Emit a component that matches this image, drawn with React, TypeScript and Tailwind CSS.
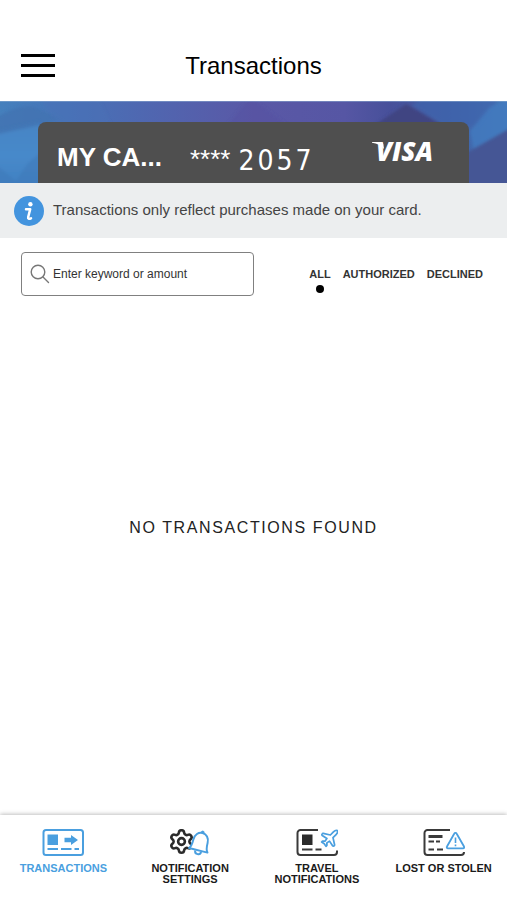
import React, { useState } from 'react';
import { Plane, Settings } from 'lucide-react';

const FILTERS = ['ALL', 'AUTHORIZED', 'DECLINED'];

const BannerArt: React.FC = () => (
  <svg className="absolute inset-0 w-full h-full" viewBox="0 0 507 82" preserveAspectRatio="none" aria-hidden="true">
    <defs>
      <linearGradient id="banner" x1="0" x2="1" y1="0" y2="0">
        <stop offset="0" stopColor="#4580bd" />
        <stop offset="0.12" stopColor="#4674b8" />
        <stop offset="0.3" stopColor="#5066b0" />
        <stop offset="0.5" stopColor="#5a58a6" />
        <stop offset="0.68" stopColor="#5656a4" />
        <stop offset="0.77" stopColor="#47509a" />
        <stop offset="0.9" stopColor="#4162a8" />
        <stop offset="1" stopColor="#4478b8" />
      </linearGradient>
      <linearGradient id="bannerSide" x1="0" x2="0" y1="0" y2="1">
        <stop offset="0" stopColor="#4684c4" />
        <stop offset="0.5" stopColor="#4789ca" />
        <stop offset="1" stopColor="#3f7fc0" />
      </linearGradient>
      <filter id="soften" x="-5%" y="-10%" width="110%" height="120%">
        <feGaussianBlur stdDeviation="1.500" />
      </filter>
    </defs>
    <rect width="507" height="82" fill="url(#banner)" />
    <g filter="url(#soften)">
      <path d="M-6 30 L40 20 L44 90 L-6 90Z" fill="url(#bannerSide)" />
      <path d="M-6 18 C8 10 20 4 34 6 L62 18 L40 24 L-6 34Z" fill="#4273b2" opacity="0.8" />
      <path d="M-6 62 L16 80 L28 62 L42 50 V90 H-6Z" fill="#3f78b8" opacity="0.5" />
      <path d="M98 -4 L112 26 H58 L40 -4Z" fill="#4a72b6" opacity="0.4" />
      <path d="M226 26 L250 -4 L290 26Z" fill="#5350a0" opacity="0.4" />
      <path d="M372 26 L406 3 L446 26Z" fill="#414582" />
      <path d="M425 -4 H500 L478 26 H446 L412 4Z" fill="#4065ac" opacity="0.7" />
      <path d="M512 -4 L490 6 L470 30 L474 50 L512 26Z" fill="#427bbf" opacity="0.8" />
      <path d="M512 26 L466 52 V90 H512Z" fill="#455795" />
    </g>
    <path d="M0 0H507" stroke="#8fb0d4" strokeWidth="1" />
  </svg>
);

const TransactionsIcon: React.FC = () => (
  <svg className="w-[42px] h-[27px]" viewBox="0 0 42 27" fill="none" stroke="#4a9fdf" strokeWidth="2" aria-hidden="true">
    <rect x="1.500" y="1" width="39.500" height="25" rx="2.500" />
    <rect x="5.500" y="5.500" width="10.500" height="10.500" fill="#4a9fdf" stroke="none" />
    <path d="M22.500 8.700h6.500V6L36 11l-7 5v-2.700h-6.500Z" fill="#4a9fdf" stroke="none" />
    <path d="M5.500 20h10.500M19 20h10.500M32.500 20h4.500" />
  </svg>
);

const NotificationIcon: React.FC = () => (
  <svg className="w-[42px] h-[27px]" viewBox="0 0 42 27" fill="none" aria-hidden="true">
    <Settings x={-1} y={-1} width={27} height={27} stroke="#2b2b2b" strokeWidth={2.3} />
    <g transform="rotate(14 31 13)">
      <path d="M28.500 22.500c0 3.800 6 3.800 6 0" stroke="#4a9fdf" strokeWidth="2" />
      <path
        d="M21.800 21.500c2-2 2.200-4.500 2.200-9.500 0-5 3.200-8.300 7.300-8.300s7.300 3.300 7.300 8.300c0 5 .2 7.500 2.200 9.500Z"
        fill="#fff"
        stroke="#4a9fdf"
        strokeWidth="2"
        strokeLinejoin="round"
      />
      <path d="M30 3.500c0-2.400 2.800-2.400 2.800 0Z" fill="#4a9fdf" stroke="#4a9fdf" strokeLinejoin="round" />
    </g>
  </svg>
);

const TravelIcon: React.FC = () => (
  <svg className="w-[42px] h-[27px]" viewBox="0 0 42 27" fill="none" stroke="#3a3a3a" strokeWidth="2" aria-hidden="true">
    <path d="M22 1H4.500a3 3 0 0 0-3 3v19a3 3 0 0 0 3 3H38a3 3 0 0 0 3-3V21.500" />
    <rect x="6" y="5.500" width="10.500" height="10.500" fill="#2b2b2b" stroke="none" />
    <path d="M6 20.500h10.500M19.500 20.500h6" />
    <Plane x={23} y={-1} width={21} height={21} stroke="#4a9fdf" strokeWidth={2} />
  </svg>
);

const LostIcon: React.FC = () => (
  <svg className="w-[42px] h-[27px]" viewBox="0 0 42 27" fill="none" stroke="#3a3a3a" strokeWidth="2" aria-hidden="true">
    <path d="M27 1H4.500a3 3 0 0 0-3 3v19a3 3 0 0 0 3 3H38a3 3 0 0 0 3-3" />
    <path d="M5.500 7.500h14" strokeWidth="3" />
    <path d="M5.500 12.500h5.500M13 12.500h4M5.500 20.500h5.500M14 20.500h6" />
    <path
      d="M31.200 4.700 24 17.500a1.200 1.200 0 0 0 1 1.900h15a1.200 1.200 0 0 0 1-1.900L33.700 4.700a1.400 1.400 0 0 0-2.500 0Z"
      stroke="#4a9fdf"
      strokeWidth="1.800"
      strokeLinejoin="round"
    />
    <path d="M32.500 8.500v5.500M32.500 15.500v1.700" stroke="#4a9fdf" strokeWidth="1.600" />
  </svg>
);

const NAV_ITEMS = [
  { lines: ['TRANSACTIONS'], icon: <TransactionsIcon />, active: true },
  { lines: ['NOTIFICATION', 'SETTINGS'], icon: <NotificationIcon />, active: false },
  { lines: ['TRAVEL', 'NOTIFICATIONS'], icon: <TravelIcon />, active: false },
  { lines: ['LOST OR STOLEN'], icon: <LostIcon />, active: false },
];

export default function App() {
  const [filter, setFilter] = useState('ALL');
  const [query, setQuery] = useState('');

  return (
    <div className="min-h-screen flex flex-col bg-white font-['Liberation_Sans',Arial,sans-serif]">
      {/* Header */}
      <header className="grid grid-cols-[1fr_auto_1fr] items-center px-[21px] pt-8 pb-0.5 h-[101px]">
        <button type="button" aria-label="Menu" className="w-[34px] flex flex-col gap-[7px]">
          <span className="h-[3px] bg-black" />
          <span className="h-[3px] bg-black" />
          <span className="h-[3px] bg-black" />
        </button>
        <h1 className="text-2xl text-black">Transactions</h1>
      </header>

      {/* Card banner */}
      <section className="relative pt-[21px] px-[38px]">
        <BannerArt />
        <div className="relative flex items-center h-[61px] pl-[19px] pr-9 rounded-t-lg bg-[#4f4f4f] text-white">
          <span className="text-[26px] font-bold pt-2.5">MY CA...</span>
          <span className="ml-7 text-[26px] pt-3.5">****</span>
          <span className="ml-2 text-[28px] tracking-[3px] pt-4 font-['DejaVu_Sans_Condensed','DejaVu_Sans',sans-serif]">
            2057
          </span>
          <span className="relative ml-auto pb-1 text-[26px] leading-none font-extrabold italic font-['Open_Sans',sans-serif]">
            <svg className="absolute -left-1 top-1 w-3 h-2" viewBox="0 0 12 8" fill="#fff" aria-hidden="true">
              <path d="M0 0h8.500c1.500 0 2.500.8 2.800 2L12 7C9.500 3.500 5 1.200 0 .7Z" />
            </svg>
            VISA
          </span>
        </div>
      </section>

      {/* Info notice */}
      <section className="flex items-center gap-[9px] h-[55px] px-3.5 bg-[#eceeef]">
        <svg className="w-[30px] h-[30px] shrink-0" viewBox="0 0 30 30" aria-hidden="true">
          <circle cx="15" cy="15" r="15" fill="#4394de" />
          <circle cx="16.400" cy="8.300" r="2.200" fill="#fff" />
          <path
            d="M12 13.300h4.200L14.200 21c-.4 1.800.6 2.200 2.800 1.300"
            fill="none"
            stroke="#fff"
            strokeWidth="2.500"
            strokeLinecap="round"
            strokeLinejoin="round"
          />
        </svg>
        <p className="text-[15px] text-[#444]">Transactions only reflect purchases made on your card.</p>
      </section>

      <main className="flex-1 flex flex-col">
        {/* Search and filters */}
        <div className="flex items-start justify-between pt-3.5 pl-[21px] pr-6">
          <label className="flex items-center gap-[3px] w-[233px] h-11 px-2 border border-[#808080] rounded">
            <svg className="w-5 h-5 shrink-0" viewBox="0 0 20 20" fill="none" stroke="#777" strokeWidth="1.400" aria-hidden="true">
              <circle cx="8" cy="8" r="6.800" />
              <path d="m13 13 5.500 5.500" strokeLinecap="round" />
            </svg>
            <input
              type="text"
              aria-label="Search transactions"
              value={query}
              onChange={(e) => setQuery(e.target.value)}
              placeholder="Enter keyword or amount"
              className="w-full min-w-0 text-xs text-[#333] placeholder-[#333] focus:outline-none"
            />
          </label>
          <div className="flex gap-3 pt-3.5">
            {FILTERS.map((name) => (
              <button
                key={name}
                type="button"
                onClick={() => setFilter(name)}
                className="flex flex-col items-center gap-[3px] text-[11px] leading-4 font-bold text-[#333]"
              >
                {name}
                {filter === name && <span className="w-2 h-2 rounded-full bg-black" />}
              </button>
            ))}
          </div>
        </div>

        {/* Empty state */}
        <div className="flex-1 flex items-center justify-center pb-14">
          <p className="text-base tracking-widest text-[#222]">NO TRANSACTIONS FOUND</p>
        </div>
      </main>

      {/* Bottom navigation */}
      <nav className="grid grid-cols-4 h-[85px] pt-3.5 bg-white shadow-[0_-1px_4px_rgba(0,0,0,0.25)]">
        {NAV_ITEMS.map((item) => (
          <a
            key={item.lines[0]}
            href="#"
            className={`flex flex-col items-center gap-[7px] text-center text-[11px] leading-[11px] font-bold ${
              item.active ? 'text-[#4a9fdf]' : 'text-[#1a1a1a]'
            }`}
          >
            {item.icon}
            <span className="flex flex-col">
              {item.lines.map((line) => (
                <span key={line}>{line}</span>
              ))}
            </span>
          </a>
        ))}
      </nav>
    </div>
  );
}
